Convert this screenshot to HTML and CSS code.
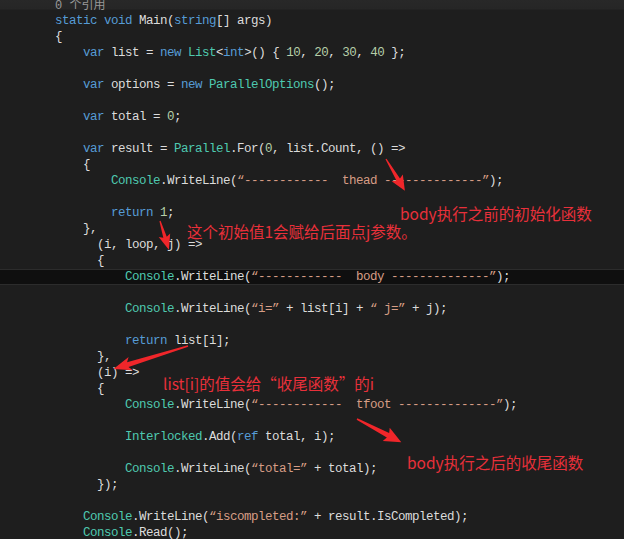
FILE: index.html
```html
<!DOCTYPE html>
<html lang="zh-CN">
<head>
    <meta charset="UTF-8">
    <title>Parallel.For</title>
    <link rel="stylesheet" href="styles.css">
</head>
<body>
    <div class="editor">
        <div class="code">
            <div class="ln lens">0 个引用</div>
            <div class="ln"><span class="k">static</span> <span class="k">void</span> Main(<span class="k">string</span>[] args)</div>
            <div class="ln">{</div>
            <div class="ln">    <span class="k">var</span> list = <span class="k">new</span> <span class="t">List</span>&lt;<span class="k">int</span>&gt;() { <span class="n">10</span>, <span class="n">20</span>, <span class="n">30</span>, <span class="n">40</span> };</div>
            <div class="ln"></div>
            <div class="ln">    <span class="k">var</span> options = <span class="k">new</span> <span class="t">ParallelOptions</span>();</div>
            <div class="ln"></div>
            <div class="ln">    <span class="k">var</span> total = <span class="n">0</span>;</div>
            <div class="ln"></div>
            <div class="ln">    <span class="k">var</span> result = <span class="t">Parallel</span>.For(<span class="n">0</span>, list.Count, () =&gt;</div>
            <div class="ln">    {</div>
            <div class="ln">        <span class="t">Console</span>.WriteLine(<span class="s">“------------  thead --------------”</span>);</div>
            <div class="ln"></div>
            <div class="ln">        <span class="k">return</span> <span class="n">1</span>;</div>
            <div class="ln">    },</div>
            <div class="ln">      (i, loop, j) =&gt;</div>
            <div class="ln">      {</div>
            <div class="ln cur">          <span class="t">Console</span>.WriteLine(<span class="s">“------------  body --------------”</span>);</div>
            <div class="ln"></div>
            <div class="ln">          <span class="t">Console</span>.WriteLine(<span class="s">“i=”</span> + list[i] + <span class="s">“ j=”</span> + j);</div>
            <div class="ln"></div>
            <div class="ln">          <span class="k">return</span> list[i];</div>
            <div class="ln">      },</div>
            <div class="ln">      (i) =&gt;</div>
            <div class="ln">      {</div>
            <div class="ln">          <span class="t">Console</span>.WriteLine(<span class="s">“------------  tfoot --------------”</span>);</div>
            <div class="ln"></div>
            <div class="ln">          <span class="t">Interlocked</span>.Add(<span class="k">ref</span> total, i);</div>
            <div class="ln"></div>
            <div class="ln">          <span class="t">Console</span>.WriteLine(<span class="s">“total=”</span> + total);</div>
            <div class="ln">      });</div>
            <div class="ln"></div>
            <div class="ln">    <span class="t">Console</span>.WriteLine(<span class="s">“iscompleted:”</span> + result.IsCompleted);</div>
            <div class="ln">    <span class="t">Console</span>.Read();</div>
        </div>

        <!-- annotations drawn over the code -->
        <div class="note note-before">body执行之前的初始化函数</div>
        <div class="note note-init">这个初始值1会赋给后面点j参数。</div>
        <div class="note note-value">list[i]的值会给“收尾函数”的i</div>
        <div class="note note-after">body执行之后的收尾函数</div>

        <svg class="arrows" width="624" height="539" viewBox="0 0 624 539">
            <polygon transform="translate(386 159) rotate(59.3)" points="0,-0.6 24,-2 22,-6.5 37,0 22,6.5 24,2 0,0.6"/>
            <polygon transform="translate(160 221) rotate(72.8)" points="0,-0.6 17,-1.8 15,-6 30,0 15,6 17,1.8 0,0.6"/>
            <polygon transform="translate(188 346) rotate(162.9)" points="0,-0.8 63,-2.5 60,-7 78,0 60,7 63,2.5 0,0.8"/>
            <polygon transform="translate(357 419) rotate(27.6)" points="0,-0.8 35,-2.5 33,-7.5 50,0 33,7.5 35,2.5 0,0.8"/>
        </svg>
    </div>
</body>
</html>
```

FILE: styles.css
```css
body {
    margin: 0;
    background: #1e1e1e;
}
.editor {
    position: relative;
    width: 624px;
    height: 539px;
    overflow: hidden;
    background: linear-gradient(#282828 0, #262626 9px, #1e1e1e 10px);
}
.code {
    margin-top: -1px;
    font-family: "Liberation Mono", "Noto Sans CJK SC", monospace;
    font-size: 12.5px;
    letter-spacing: -0.5px;
    color: #dcdcdc;
}
.ln {
    height: 16px;
    line-height: 16px;
    padding-left: 55px;
    white-space: pre;
}
.lens {
    height: 14px;
    line-height: 14px;
    font-size: 12px;
    letter-spacing: 0;
    color: #999999;
}
.cur {
    background: #0f0f0f;
    box-shadow: inset 0 1px 0 #2c2c2c, inset 0 -1px 0 #2c2c2c;
}
.k {
    color: #569cd6;
}
.t {
    color: #4ec9b0;
}
.s {
    color: #d69d85;
}
.n {
    color: #b5cea8;
}
.note {
    position: absolute;
    font-family: "Noto Sans CJK SC", "Noto Sans", sans-serif;
    font-size: 15.5px;
    line-height: 16px;
    color: #e8303a;
    white-space: nowrap;
}
.note-before {
    left: 400px;
    top: 205px;
}
.note-init {
    left: 187px;
    top: 223px;
}
.note-value {
    left: 163px;
    top: 375px;
}
.note-after {
    left: 407px;
    top: 454px;
}
.arrows {
    position: absolute;
    left: 0;
    top: 0;
    fill: #f0262a;
}
```
